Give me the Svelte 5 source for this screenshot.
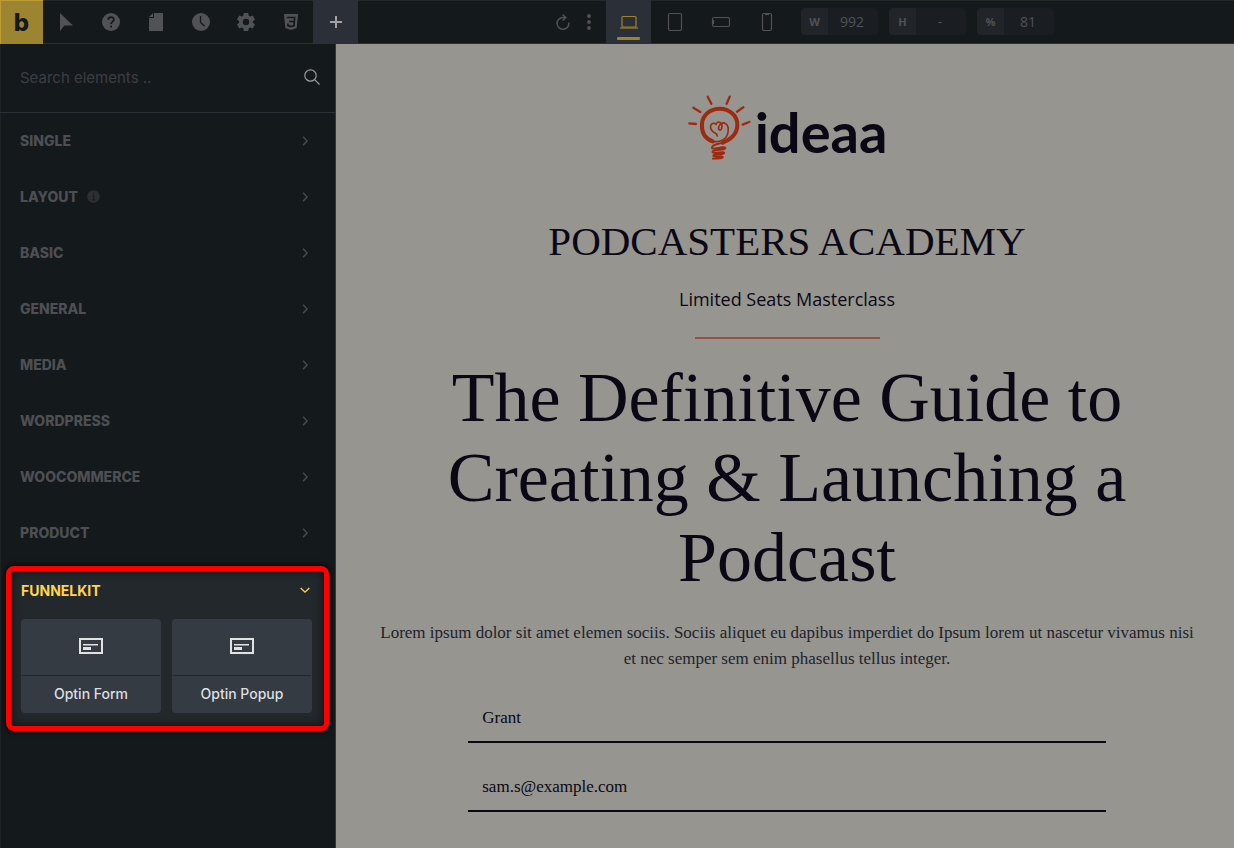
<script lang="ts">
  const tools = ['Select', 'Help', 'Pages', 'History', 'Settings', 'CSS'];

  const devices = [
    { name: 'Laptop', active: true },
    { name: 'Tablet', active: false },
    { name: 'Mobile landscape', active: false },
    { name: 'Mobile portrait', active: false },
  ];

  const sizes = [
    { id: 'width', label: 'W', value: '992' },
    { id: 'height', label: 'H', value: '-' },
    { id: 'scale', label: '%', value: '81' },
  ];

  const categories = ['Single', 'Layout', 'Basic', 'General', 'Media', 'WordPress', 'WooCommerce', 'Product'];

  const elements = ['Optin Form', 'Optin Popup'];
</script>

<div class="builder">
  <header class="toolbar">
    <div class="tools">
      <button class="brand" aria-label="Bricks">b</button>
      {#each tools as tool}
        <button class="tool" aria-label={tool}>
          <svg width="20" height="20" viewBox="0 0 20 20" fill="currentColor">
            {#if tool === 'Select'}
              <path d="M4 1v18l4.300-5.600H17z" />
            {:else if tool === 'Help'}
              <circle cx="10" cy="10" r="9" />
              <path d="M7.200 7.800c0-3.600 5.700-3.600 5.700-.2 0 2-2.800 2.100-2.800 4.300M10.100 13.600v1.900" fill="none" stroke="#14191c" stroke-width="1.800" />
            {:else if tool === 'Pages'}
              <path d="M8 1h9v18H3V6h5z" />
              <path d="M3 5l4-4v4z" />
            {:else if tool === 'History'}
              <circle cx="10" cy="10" r="9" />
              <path d="M9.500 4v6.500l4 3.500" fill="none" stroke="#14191c" stroke-width="1.300" />
            {:else if tool === 'Settings'}
              <path
                fill-rule="evenodd"
                d="M7.800 1h4.400l.5 2.700 1.500.9 2.600-1 2.200 3.800-2.100 1.800v1.600l2.100 1.800-2.200 3.800-2.600-1-1.500.9-.5 2.700H7.800l-.5-2.700-1.500-.9-2.600 1L1 12.600l2.100-1.800V9.200L1 7.400l2.200-3.800 2.600 1 1.500-.9zM10 6.800a3.200 3.200 0 100 6.400 3.200 3.200 0 000-6.400z"
              />
            {:else}
              <path d="M3 2h14l-1.300 14L10 18l-5.700-2z" />
              <path d="M5.800 5.500h7.800l-.3 4H8M13.300 9.500l-.3 4-3 1-3-1-.2-1.800" fill="none" stroke="#14191c" stroke-width="1.700" />
            {/if}
          </svg>
        </button>
      {/each}
      <button class="tool add" aria-label="Add element">
        <svg width="14" height="14" viewBox="0 0 14 14" fill="none" stroke="currentColor" stroke-width="2">
          <path d="M7 1v12M1 7h12" />
        </svg>
      </button>
    </div>

    <div class="preview-tools">
      <button class="small" aria-label="Reload">
        <svg width="14" height="16" viewBox="0 0 14 16" fill="none" stroke="currentColor" stroke-width="1.500">
          <path d="M12.800 8.500A5.900 5.900 0 117 3.500h2.500" />
          <path d="M6.500.5l3.300 3-3.300 3" />
        </svg>
      </button>
      <button class="small" aria-label="More">
        <svg width="4" height="16" viewBox="0 0 4 16" fill="currentColor">
          <circle cx="2" cy="2" r="1.900" /><circle cx="2" cy="8" r="1.900" /><circle cx="2" cy="14" r="1.900" />
        </svg>
      </button>
      <div class="devices">
        {#each devices as device}
          <button class="device" class:active={device.active} aria-label={device.name}>
            <svg width="20" height="20" viewBox="0 0 20 20" fill="none" stroke="currentColor" stroke-width="1.200">
              {#if device.name === 'Laptop'}
                <rect x="3" y="4.500" width="14" height="10.500" rx="1" /><path d="M1 16h18" />
              {:else if device.name === 'Tablet'}
                <rect x="3.500" y="1.500" width="13" height="17" rx="1.500" />
              {:else if device.name === 'Mobile landscape'}
                <rect x="1.500" y="5.500" width="17" height="9" rx="1.500" /><path d="M2.500 8v4" />
              {:else}
                <rect x="5.500" y="1.500" width="9" height="17" rx="1.500" /><path d="M8 2.500h4" />
              {/if}
            </svg>
          </button>
        {/each}
      </div>
      <div class="sizes">
        {#each sizes as size}
          <div class="size">
            <label for={size.id}>{size.label}</label>
            <input id={size.id} value={size.value} />
          </div>
        {/each}
      </div>
    </div>
  </header>

  <div class="body">
    <aside class="panel">
      <div class="search">
        <input type="text" placeholder="Search elements .." aria-label="Search elements" />
        <button class="find" aria-label="Search">
          <svg width="16" height="16" viewBox="0 0 16 16" fill="none" stroke="currentColor" stroke-width="1.200">
            <circle cx="6.500" cy="6.500" r="5.700" /><path d="M10.600 10.600l4.900 4.900" />
          </svg>
        </button>
      </div>

      {#each categories as category}
        <button class="category">
          <span>{category}</span>
          {#if category === 'Layout'}
            <svg class="info" width="13" height="13" viewBox="0 0 13 13">
              <circle cx="6.500" cy="6.500" r="6.300" fill="#2d3033" />
              <path d="M6.500 2.600v1.600M5 5.800h1.700v4M4.800 9.800h3.500" fill="none" stroke="#1b1f22" stroke-width="1.300" />
            </svg>
          {/if}
          <svg class="chevron" width="10" height="10" viewBox="0 0 10 10" fill="none" stroke="currentColor" stroke-width="1.300">
            <path d="M3 .7L7.200 5 3 9.300" />
          </svg>
        </button>
      {/each}

      <section class="open-category">
        <button class="category open">
          <span>FunnelKit</span>
          <svg class="chevron" width="10" height="10" viewBox="0 0 10 10" fill="none" stroke="currentColor" stroke-width="1.300">
            <path d="M.7 3L5 7.200 9.300 3" />
          </svg>
        </button>
        <div class="elements">
          {#each elements as element}
            <button class="element">
              <span class="element-icon">
                <svg width="24" height="16" viewBox="0 0 24 16">
                  <path d="M1 1h22v14H1z" fill="none" stroke="#e0e2e4" stroke-width="2" />
                  <path d="M4 6h15v1.500H4zM4 9h8v3H4z" fill="#e0e2e4" />
                </svg>
              </span>
              <span class="element-name">{element}</span>
            </button>
          {/each}
        </div>
      </section>
    </aside>

    <main class="canvas">
      <div class="logo">
        <svg width="64" height="68" viewBox="30 25 192 204" fill="none" stroke="#9d2b12" stroke-linecap="round" stroke-linejoin="round">
          <path d="M37 113l20 2M49 66l21 13M92 33l11 21M158 33l-9 21M199 65l-19 13M217 109l-20 8" stroke-width="7" />
          <path d="M107 167C82 158 73 137 75 113c3-26 25-44 53-44 29 0 53 21 53 48 0 31-22 45-44 54" stroke-width="12" />
          <path
            d="M107 167c19 3 42-3 46-27 5-26-16-37-26-20-7 12 4 18 7 8 5-17-12-25-17-12-12-10-23 6-11 20 7 8 14 6 15 15"
            stroke-width="5"
          />
          <path d="M138 170c-20 7-35 8-33 17 3 7 37-8 40 0 2 8-43 3-38 13 3 6 36-5 34 2-2 8-33 1-32 9 2 6 30-2 28 4-3 6-24 2-29 4" stroke-width="6" />
        </svg>
        <span>ideaa</span>
      </div>

      <h2>PODCASTERS ACADEMY</h2>
      <p class="tagline">Limited Seats Masterclass</p>
      <hr />
      <h1>The Definitive Guide to Creating &amp; Launching a Podcast</h1>
      <p class="intro">
        Lorem ipsum dolor sit amet elemen sociis. Sociis aliquet eu dapibus imperdiet do Ipsum lorem ut nascetur vivamus nisi
        et nec semper sem enim phasellus tellus integer.
      </p>
      <form class="optin">
        <input type="text" value="Grant" aria-label="Name" />
        <input type="email" value="sam.s@example.com" aria-label="Email" />
      </form>
    </main>
  </div>
</div>

<style>
:global(body) {
  background: #14191c;
}

.builder {
  display: flex;
  flex-direction: column;
  height: 100vh;
  overflow: hidden;
  font-family: Inter, "Liberation Sans", sans-serif;
  color: #505255;
}

.builder *,
.builder *::before {
  box-sizing: border-box;
}

button {
  display: flex;
  align-items: center;
  justify-content: center;
  padding: 0;
  border: 0;
  background: none;
  color: inherit;
  font: inherit;
}

input {
  min-width: 0;
  padding: 0;
  border: 0;
  outline: 0;
  background: none;
  color: inherit;
  font: inherit;
}

.toolbar {
  display: flex;
  flex: none;
  height: 44px;
  border-bottom: 1px solid #2b3036;
  background: #14191c;
  box-shadow: inset 0 1px #23282b;
}

.tools,
.devices,
.sizes {
  display: flex;
}

.brand {
  width: 43px;
  height: 44px;
  background: #9c8431;
  box-shadow: inset 1px 1px #bd9c35;
  color: #14191c;
  font-size: 24px;
  font-weight: 800;
}

.tool {
  width: 45px;
}

.tool.add {
  height: 43px;
  background: #2b2f37;
  color: #a0a1a2;
}

.preview-tools {
  display: flex;
  flex: 1;
  align-items: center;
  justify-content: center;
  padding-left: 12px;
}

.small {
  width: 26px;
  height: 43px;
}

.devices {
  gap: 1px;
  margin: 0 12px 0 4px;
}

.device {
  position: relative;
  width: 45px;
  height: 43px;
}

.device.active {
  background: #2b2f37;
  color: #9c8431;
}

.device.active::before {
  content: '';
  position: absolute;
  bottom: 3px;
  left: 11px;
  width: 23px;
  height: 3px;
  border-radius: 1px;
  background: #9c8431;
}

.sizes {
  gap: 11px;
}

.size {
  display: flex;
  width: 77px;
  height: 27px;
  overflow: hidden;
  border-radius: 4px;
  background: #1a1e22;
  font-family: "Open Sans", sans-serif;
}

.size label {
  flex: none;
  width: 27px;
  background: #212529;
  font-size: 11px;
  font-weight: 700;
  line-height: 27px;
  text-align: center;
}

.size input {
  width: 48px;
  font-size: 14px;
  text-align: center;
}

.body {
  display: flex;
  flex: 1;
  min-height: 0;
}

.panel {
  flex: none;
  width: 336px;
  border-right: 1px solid #33363a;
  background: #14191c;
  box-shadow: inset 1px 0 #1d2225;
}

.search {
  display: flex;
  align-items: center;
  height: 69px;
  padding: 0 15px 2px 20px;
  border-bottom: 1px solid #2b3036;
}

.search input {
  flex: 1;
  font-size: 15px;
}

.search input::placeholder {
  color: #3c3f42;
  opacity: 1;
}

.find {
  color: #98999b;
}

.category {
  width: 100%;
  height: 56px;
  padding: 0 25px 1px 20px;
  color: #4d4f52;
  font-size: 14px;
  font-weight: 800;
  text-transform: uppercase;
}

.info {
  margin-left: 9px;
}

.chevron {
  margin-left: auto;
}

.open-category {
  margin: 5px 6px;
  padding: 0 12px 13px 10px;
  border: 5px solid #f00;
  border-radius: 8px;
  background: #23282c;
  box-shadow: 0 0 6px #000, inset 0 0 10px #0c0f11;
}

.category.open {
  height: 40px;
  padding: 0 2px 2px 0;
  color: #ffd64f;
  font-weight: 700;
}

.elements {
  display: grid;
  grid-template-columns: 1fr 1fr;
  gap: 11px;
  margin-top: 8px;
}

.element {
  flex-direction: column;
  height: 94px;
  padding: 0 1px;
  border-radius: 4px;
  background: #343b43;
  color: #dddfe1;
  font-size: 14px;
  font-weight: 500;
}

.element-icon {
  display: flex;
  align-items: center;
  justify-content: center;
  width: 100%;
  height: 57px;
  padding-bottom: 2px;
  border-bottom: 1px solid #22272b;
}

.element-name {
  padding-bottom: 2px;
  line-height: 35px;
}

.canvas {
  display: flex;
  flex: 1;
  flex-direction: column;
  align-items: center;
  min-width: 0;
  padding: 48px 22px 0 26px;
  background: #979590;
  color: #0a0814;
  font-family: "Liberation Serif", serif;
  text-align: center;
}

.logo {
  display: flex;
  align-items: center;
  gap: 4px;
  height: 72px;
  font-family: Lato, sans-serif;
  font-size: 56px;
  font-weight: 700;
  line-height: 64px;
}

.logo span {
  padding-top: 8px;
}

h1,
h2,
p,
hr {
  margin: 0;
}

h2 {
  margin-top: 52px;
  font-size: 41px;
  font-weight: 400;
  line-height: 50px;
}

.tagline {
  margin-top: 20px;
  font-family: "Open Sans", sans-serif;
  font-size: 18px;
  line-height: 26px;
}

hr {
  width: 185px;
  margin-top: 25px;
  border: 0;
  border-top: 2px solid #9a5145;
}

h1 {
  max-width: 740px;
  margin-top: 19px;
  font-size: 70px;
  font-weight: 400;
  line-height: 80px;
}

.intro {
  margin-top: 22px;
  padding: 0 14px;
  color: #20232b;
  font-size: 17px;
  line-height: 26px;
}

.optin {
  display: flex;
  flex-direction: column;
  gap: 20px;
  width: 75%;
  margin-top: 22px;
}

.optin input {
  height: 49px;
  padding: 0 14px;
  border-bottom: 2px solid #0a0814;
  font-size: 17px;
}
</style>
